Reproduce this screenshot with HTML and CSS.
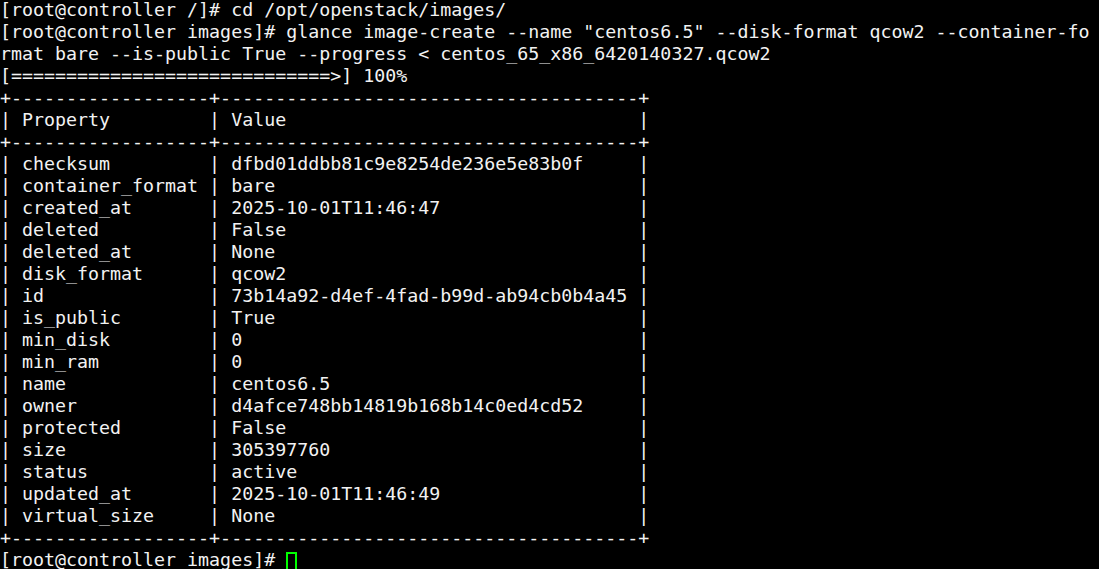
FILE: index.html
```html
<!DOCTYPE html>
<html>
<head>
<meta charset="utf-8">
<link rel="stylesheet" href="styles.css">
</head>
<body>
<pre class="term">[root@controller /]# cd /opt/openstack/images/
[root@controller images]# glance image-create --name "centos6.5" --disk-format qcow2 --container-fo
rmat bare --is-public True --progress &lt; centos_65_x86_6420140327.qcow2
[=============================&gt;] 100%
+------------------+--------------------------------------+
| Property         | Value                                |
+------------------+--------------------------------------+
| checksum         | dfbd01ddbb81c9e8254de236e5e83b0f     |
| container_format | bare                                 |
| created_at       | 2025-10-01T11:46:47                  |
| deleted          | False                                |
| deleted_at       | None                                 |
| disk_format      | qcow2                                |
| id               | 73b14a92-d4ef-4fad-b99d-ab94cb0b4a45 |
| is_public        | True                                 |
| min_disk         | 0                                    |
| min_ram          | 0                                    |
| name             | centos6.5                            |
| owner            | d4afce748bb14819b168b14c0ed4cd52     |
| protected        | False                                |
| size             | 305397760                            |
| status           | active                               |
| updated_at       | 2025-10-01T11:46:49                  |
| virtual_size     | None                                 |
+------------------+--------------------------------------+
[root@controller images]# <span class="cursor"></span></pre>
</body>
</html>
```
FILE: styles.css
```css
html, body {
  margin: 0;
  padding: 0;
  background: #000;
  height: 100%;
  overflow: hidden;
}
.term {
  margin: -1px 0 0 0;
  padding: 0;
  font-family: "DejaVu Sans Mono", monospace;
  font-size: 18.3px;
  line-height: 22px;
  color: #f2f2f2;
  white-space: pre;
}
.cursor {
  display: inline-block;
  width: 11px;
  height: 21px;
  border: 2px solid #00ff00;
  box-sizing: border-box;
  vertical-align: -7px;
}
```
